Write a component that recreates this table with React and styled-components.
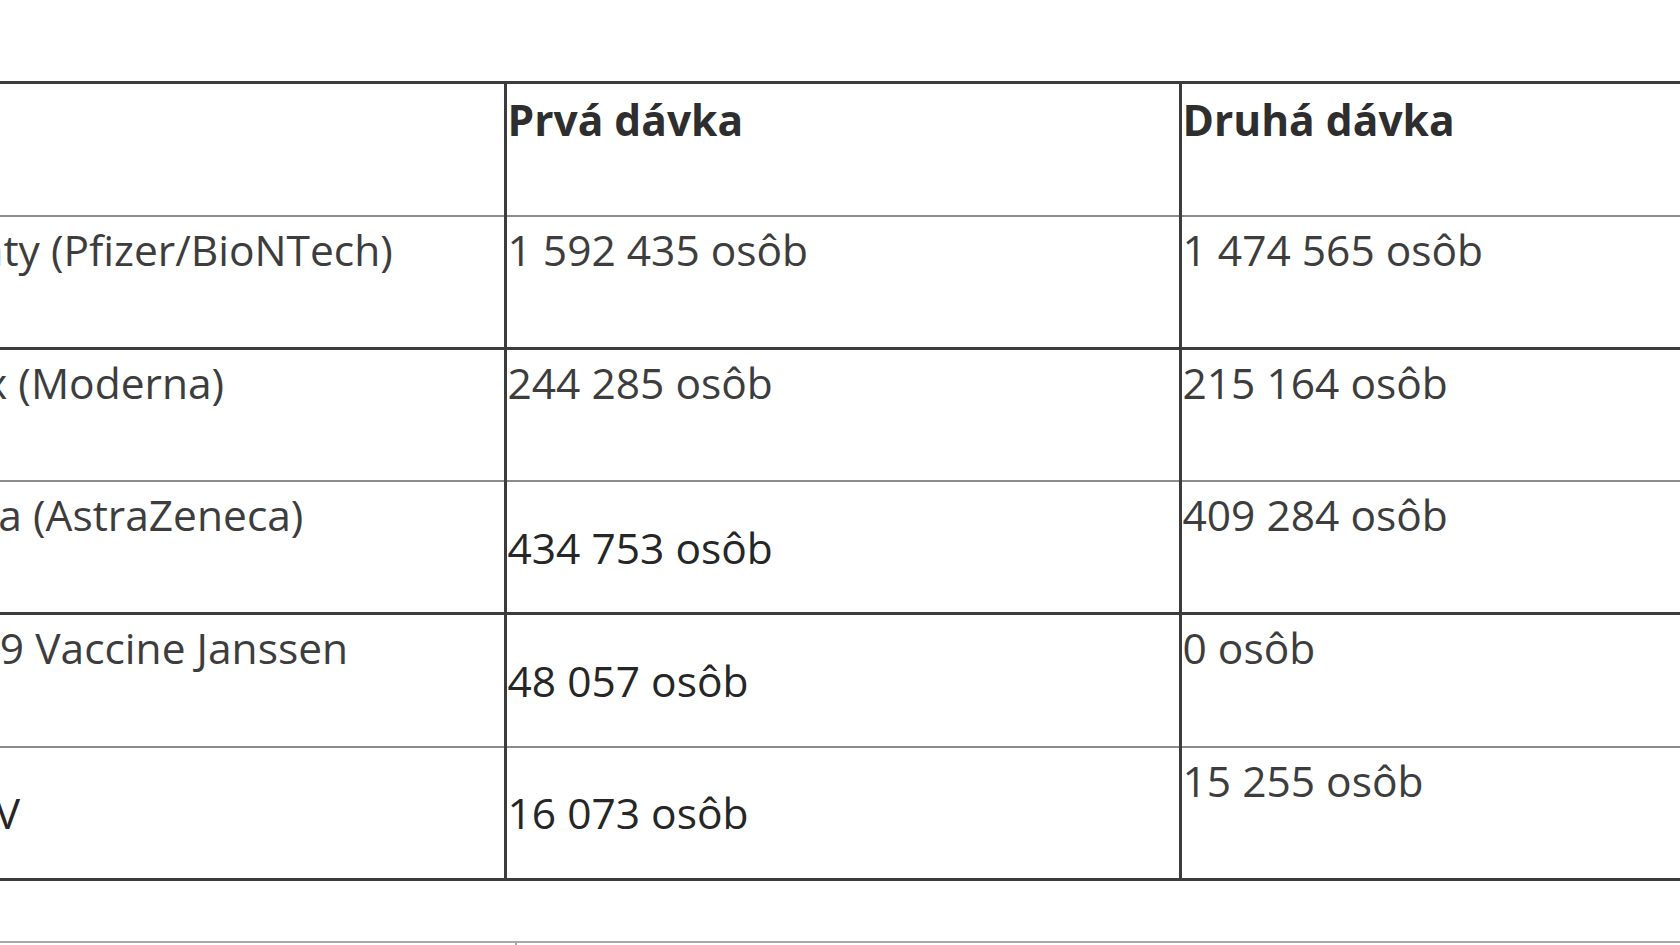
import React from 'react';
import styled, { createGlobalStyle } from 'styled-components';

const GlobalStyle = createGlobalStyle`
  html, body {
    margin: 0;
    padding: 0;
    background: #fff;
  }
  body {
    font-family: "Open Sans", "Noto Sans", "Liberation Sans", sans-serif;
    color: #3a3a3a;
  }
`;

const Page = styled.div`
  width: 1680px;
  height: 945px;
  overflow: hidden;
  padding-top: 81px;
  box-sizing: border-box;
`;

const Table = styled.table`
  border-collapse: collapse;
  table-layout: fixed;
  width: 2055px;
  margin-left: -167px;
  font-size: 42.5px;
  line-height: 1.5;
`;

const HeadCell = styled.th`
  text-align: left;
  vertical-align: top;
  font-weight: 700;
  color: #2e2e2e;
  height: 133px;
  padding: 4px 1px 0;
  border-top: 3px solid #3c3c3c;
  border-left: 3px solid #3c3c3c;
  border-bottom: 2px solid #8c8c8c;
  box-sizing: border-box;

  &:first-child {
    border-left: none;
  }
`;

const Cell = styled.td`
  vertical-align: ${p => (p.$mid ? 'middle' : 'top')};
  color: ${p => (p.$mid ? '#262626' : '#3d3d3d')};
  height: 129.3px;
  padding: 1px 1px 0;
  border-left: 3px solid #3c3c3c;
  border-bottom: ${p => (p.$dark ? '3px solid #3c3c3c' : '2px solid #8c8c8c')};
  white-space: nowrap;
  overflow: hidden;

  &:first-child {
    border-left: none;
  }
`;

const NextBlock = styled.div`
  margin-top: 60px;
  border-top: 2px solid #a8a8a8;
  height: 20px;
  padding-left: 515px;
`;

const Tick = styled.div`
  width: 0;
  height: 100%;
  border-left: 2px solid #a8a8a8;
`;

const rows = [
  { name: 'Comirnaty (Pfizer/BioNTech)', first: '1 592 435 osôb', second: '1 474 565 osôb', dark: true },
  { name: 'Spikevax (Moderna)', first: '244 285 osôb', second: '215 164 osôb', dark: false },
  { name: 'Vaxzevria (AstraZeneca)', first: '434 753 osôb', second: '409 284 osôb', firstMid: true, dark: true },
  { name: 'COVID-19 Vaccine Janssen', first: '48 057 osôb', second: '0 osôb', firstMid: true, dark: false },
  { name: 'Sputnik V', first: '16 073 osôb', second: '15 255 osôb', nameMid: true, firstMid: true, dark: true },
];

export default function App() {
  return (
    <Page>
      <GlobalStyle />
      <Table>
        <colgroup>
          <col style={{ width: 672 }} />
          <col style={{ width: 675 }} />
          <col style={{ width: 708 }} />
        </colgroup>
        <thead>
          <tr>
            <HeadCell />
            <HeadCell>Prvá dávka</HeadCell>
            <HeadCell>Druhá dávka</HeadCell>
          </tr>
        </thead>
        <tbody>
          {rows.map(r => (
            <tr key={r.name}>
              <Cell $mid={r.nameMid} $dark={r.dark}>{r.name}</Cell>
              <Cell $mid={r.firstMid} $dark={r.dark}>{r.first}</Cell>
              <Cell $dark={r.dark}>{r.second}</Cell>
            </tr>
          ))}
        </tbody>
      </Table>
      <NextBlock>
        <Tick />
      </NextBlock>
    </Page>
  );
}
